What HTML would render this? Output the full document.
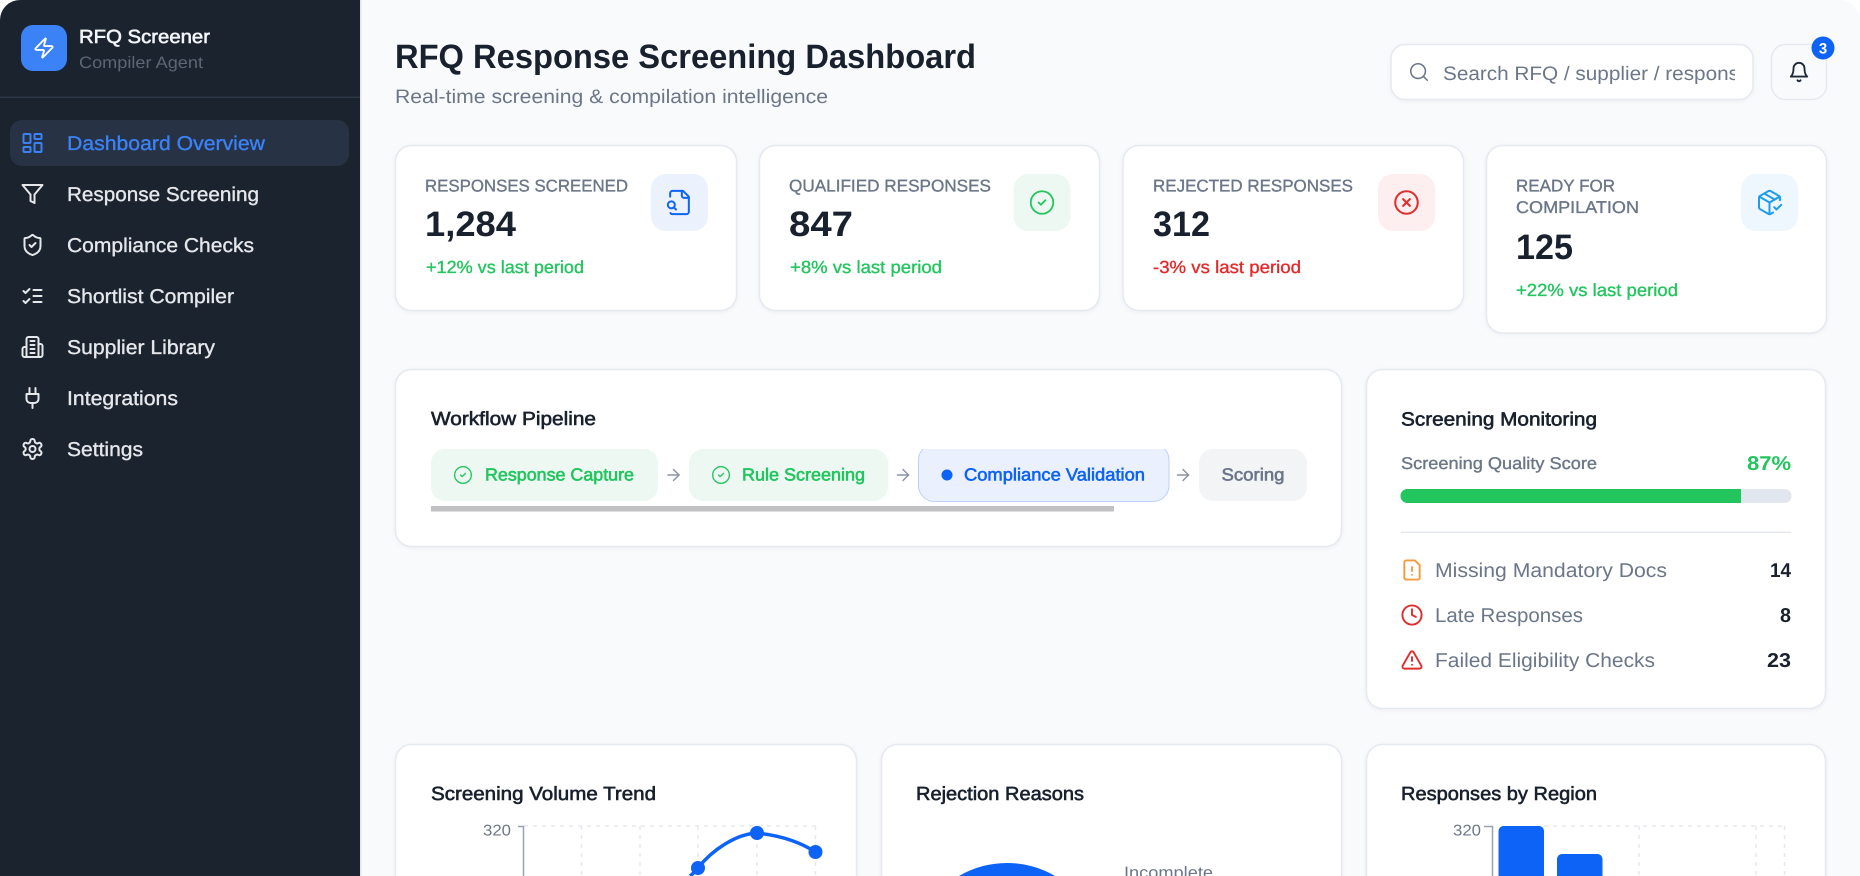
<!DOCTYPE html>
<html lang="en">
<head>
<meta charset="utf-8">
<title>RFQ Response Screening Dashboard</title>
<style>
html,body{margin:0;padding:0;background:#fff;width:1860px;height:876px;overflow:hidden}
svg.root{display:block;font-family:"Liberation Sans",sans-serif;text-rendering:geometricPrecision}
text{fill:currentColor;stroke:currentColor;stroke-width:0}
.m{stroke-width:.35px}
.s{stroke-width:.6px}
.b{font-weight:700}
.card{fill:#fff;stroke:#e6e9ef;stroke-width:1.5;filter:drop-shadow(0 1px 2px rgba(15,23,42,.05))}
.i{fill:none;stroke:currentColor;stroke-linecap:round;stroke-linejoin:round;overflow:visible}
.grid{fill:none;stroke:#e5e8ed;stroke-width:1.5;stroke-dasharray:4 5}
.axis{fill:none;stroke:#98a2b3;stroke-width:1.5}
</style>
</head>
<body>
<svg class="root" xmlns="http://www.w3.org/2000/svg" width="1860" height="876" viewBox="0 0 1860 876">
<defs>
<clipPath id="win"><path d="M0 876V20A20 20 0 0 1 20 0H1840A20 20 0 0 1 1860 20V876Z"/></clipPath>
<clipPath id="sclip"><rect x="1400" y="44" width="335" height="56"/></clipPath>
<clipPath id="pclip"><rect x="420" y="449" width="900" height="60"/></clipPath>
</defs>
<g clip-path="url(#win)">
<rect x="0" y="0" width="1860" height="876" fill="#f9fafc"/>

<!-- Sidebar -->
<rect x="0" y="0" width="360" height="876" fill="#1b232e"/>
<rect x="360" y="0" width="1.5" height="876" fill="#e4e7ec"/>
<rect x="21" y="25" width="46" height="46" rx="12" fill="#3b82f6"/>
<svg class="i" x="32.500" y="36.500" width="23" height="23" viewBox="0 0 24 24" stroke-width="1.9" color="#fff"><path d="M4 14a1 1 0 0 1-.78-1.63l9.9-10.2a.5.5 0 0 1 .86.46l-1.92 6.02A1 1 0 0 0 13 10h7a1 1 0 0 1 .78 1.63l-9.9 10.2a.5.5 0 0 1-.86-.46l1.92-6.02A1 1 0 0 0 11 14z"/></svg>
<text x="79" y="43" font-size="19" class="s" color="#f3f5f8" textLength="131" lengthAdjust="spacingAndGlyphs">RFQ Screener</text>
<text x="79" y="68" font-size="16.500" color="#5d6673" textLength="124" lengthAdjust="spacingAndGlyphs">Compiler Agent</text>
<rect x="0" y="96.500" width="360" height="1.500" fill="#2c3745"/>

<rect x="10" y="120" width="339" height="46" rx="12" fill="#273244"/>
<svg class="i" x="20.500" y="131" width="24" height="24" viewBox="0 0 24 24" stroke-width="2" color="#3b82f6"><rect x="3" y="3" width="7" height="9" rx="1"/><rect x="14" y="3" width="7" height="5" rx="1"/><rect x="14" y="12" width="7" height="9" rx="1"/><rect x="3" y="16" width="7" height="5" rx="1"/></svg>
<text x="67" y="150" font-size="20" class="m" color="#3b82f6" textLength="198" lengthAdjust="spacingAndGlyphs">Dashboard Overview</text>

<svg class="i" x="20.500" y="182" width="24" height="24" viewBox="0 0 24 24" stroke-width="2" color="#e5e7eb"><polygon points="22 3 2 3 10 12.46 10 19 14 21 14 12.46 22 3"/></svg>
<text x="67" y="201" font-size="20" class="m" color="#e5e7eb" textLength="192" lengthAdjust="spacingAndGlyphs">Response Screening</text>

<svg class="i" x="20.500" y="233" width="24" height="24" viewBox="0 0 24 24" stroke-width="2" color="#e5e7eb"><path d="M20 13c0 5-3.500 7.500-7.660 8.950a1 1 0 0 1-.67-.01C7.500 20.500 4 18 4 13V6a1 1 0 0 1 1-1c2 0 4.500-1.200 6.240-2.720a1.170 1.170 0 0 1 1.520 0C14.510 3.810 17 5 19 5a1 1 0 0 1 1 1z"/><path d="m9 12 2 2 4-4"/></svg>
<text x="67" y="252" font-size="20" class="m" color="#e5e7eb" textLength="187" lengthAdjust="spacingAndGlyphs">Compliance Checks</text>

<svg class="i" x="20.500" y="284" width="24" height="24" viewBox="0 0 24 24" stroke-width="2" color="#e5e7eb"><path d="m3 17 2 2 4-4"/><path d="m3 7 2 2 4-4"/><path d="M13 6h8"/><path d="M13 12h8"/><path d="M13 18h8"/></svg>
<text x="67" y="303" font-size="20" class="m" color="#e5e7eb" textLength="167" lengthAdjust="spacingAndGlyphs">Shortlist Compiler</text>

<svg class="i" x="20.500" y="335" width="24" height="24" viewBox="0 0 24 24" stroke-width="2" color="#e5e7eb"><path d="M6 22V4a2 2 0 0 1 2-2h8a2 2 0 0 1 2 2v18Z"/><path d="M6 12H4a2 2 0 0 0-2 2v6a2 2 0 0 0 2 2h2"/><path d="M18 9h2a2 2 0 0 1 2 2v9a2 2 0 0 1-2 2h-2"/><path d="M10 6h4"/><path d="M10 10h4"/><path d="M10 14h4"/><path d="M10 18h4"/></svg>
<text x="67" y="354" font-size="20" class="m" color="#e5e7eb" textLength="148" lengthAdjust="spacingAndGlyphs">Supplier Library</text>

<svg class="i" x="20.500" y="386" width="24" height="24" viewBox="0 0 24 24" stroke-width="2" color="#e5e7eb"><path d="M12 22v-5"/><path d="M9 8V2"/><path d="M15 8V2"/><path d="M18 8v5a4 4 0 0 1-4 4h-4a4 4 0 0 1-4-4V8Z"/></svg>
<text x="67" y="405" font-size="20" class="m" color="#e5e7eb" textLength="111" lengthAdjust="spacingAndGlyphs">Integrations</text>

<svg class="i" x="20.500" y="437" width="24" height="24" viewBox="0 0 24 24" stroke-width="2" color="#e5e7eb"><path d="M12.220 2h-.44a2 2 0 0 0-2 2v.18a2 2 0 0 1-1 1.730l-.43.25a2 2 0 0 1-2 0l-.15-.08a2 2 0 0 0-2.730.73l-.22.38a2 2 0 0 0 .73 2.730l.15.1a2 2 0 0 1 1 1.720v.51a2 2 0 0 1-1 1.740l-.15.09a2 2 0 0 0-.73 2.730l.22.38a2 2 0 0 0 2.730.73l.15-.08a2 2 0 0 1 2 0l.43.25a2 2 0 0 1 1 1.730V20a2 2 0 0 0 2 2h.44a2 2 0 0 0 2-2v-.18a2 2 0 0 1 1-1.730l.43-.25a2 2 0 0 1 2 0l.15.08a2 2 0 0 0 2.730-.73l.22-.39a2 2 0 0 0-.73-2.730l-.15-.08a2 2 0 0 1-1-1.740v-.5a2 2 0 0 1 1-1.740l.15-.09a2 2 0 0 0 .73-2.730l-.22-.38a2 2 0 0 0-2.730-.73l-.15.08a2 2 0 0 1-2 0l-.43-.25a2 2 0 0 1-1-1.730V4a2 2 0 0 0-2-2z"/><circle cx="12" cy="12" r="3"/></svg>
<text x="67" y="456" font-size="20" class="m" color="#e5e7eb" textLength="76" lengthAdjust="spacingAndGlyphs">Settings</text>

<!-- Header -->
<text x="395" y="68" font-size="33.800" class="b" color="#18212d" textLength="581" lengthAdjust="spacingAndGlyphs">RFQ Response Screening Dashboard</text>
<text x="395" y="103" font-size="19.500" color="#6b7688" textLength="433" lengthAdjust="spacingAndGlyphs">Real-time screening &amp; compilation intelligence</text>

<rect class="card" x="1391" y="44.500" width="362" height="55" rx="14"/>
<svg class="i" x="1408" y="61" width="22" height="22" viewBox="0 0 24 24" stroke-width="1.700" color="#6b7688"><circle cx="11" cy="11" r="8"/><path d="m21 21-4.300-4.300"/></svg>
<g clip-path="url(#sclip)"><text x="1443" y="80" font-size="19.500" color="#6b7688" textLength="296" lengthAdjust="spacingAndGlyphs">Search RFQ / supplier / respons</text></g>

<rect x="1771.500" y="44.500" width="55" height="55" rx="14" fill="#f9fafc" stroke="#e6e9ef" stroke-width="1.500"/>
<svg class="i" x="1788" y="61" width="22" height="22" viewBox="0 0 24 24" stroke-width="2" color="#1f2937"><path d="M6 8a6 6 0 0 1 12 0c0 7 3 9 3 9H3s3-2 3-9"/><path d="M10.300 21a1.940 1.940 0 0 0 3.400 0"/></svg>
<circle cx="1823" cy="48" r="11.500" fill="#0d63f5"/>
<text x="1823" y="53.500" font-size="15" class="b" color="#fff" text-anchor="middle">3</text>

<!-- Stat cards -->
<rect class="card" x="395.500" y="145.500" width="341" height="165" rx="16"/>
<text x="425" y="191.500" font-size="17" class="m" color="#6b7688" textLength="203" lengthAdjust="spacingAndGlyphs">RESPONSES SCREENED</text>
<text x="425" y="236" font-size="35.500" class="b" color="#18212d" textLength="91" lengthAdjust="spacingAndGlyphs">1,284</text>
<text x="426" y="273" font-size="17.500" class="m" color="#22c55e" textLength="158" lengthAdjust="spacingAndGlyphs">+12% vs last period</text>
<rect x="651" y="174" width="57" height="57" rx="15" fill="#ecf1fe"/>
<svg class="i" x="665.500" y="188.500" width="28" height="28" viewBox="0 0 24 24" stroke-width="1.700" color="#0d63f5"><path d="M14 2v4a2 2 0 0 0 2 2h4"/><path d="M4.268 21a2 2 0 0 0 1.727 1H18a2 2 0 0 0 2-2V7l-5-5H6a2 2 0 0 0-2 2v3"/><path d="m9 18-1.500-1.500"/><circle cx="5" cy="14" r="3"/></svg>

<rect class="card" x="759.500" y="145.500" width="340" height="165" rx="16"/>
<text x="789" y="191.500" font-size="17" class="m" color="#6b7688" textLength="202" lengthAdjust="spacingAndGlyphs">QUALIFIED RESPONSES</text>
<text x="789" y="236" font-size="35.500" class="b" color="#18212d" textLength="64" lengthAdjust="spacingAndGlyphs">847</text>
<text x="790" y="273" font-size="17.500" class="m" color="#22c55e" textLength="152" lengthAdjust="spacingAndGlyphs">+8% vs last period</text>
<rect x="1013.500" y="174" width="57" height="57" rx="15" fill="#ecf8f1"/>
<svg class="i" x="1028.500" y="189" width="27" height="27" viewBox="0 0 24 24" stroke-width="1.600" color="#22c55e"><circle cx="12" cy="12" r="10"/><path d="m9 12 2 2 4-4"/></svg>

<rect class="card" x="1123" y="145.500" width="340.500" height="165" rx="16"/>
<text x="1153" y="191.500" font-size="17" class="m" color="#6b7688" textLength="200" lengthAdjust="spacingAndGlyphs">REJECTED RESPONSES</text>
<text x="1153" y="236" font-size="35.500" class="b" color="#18212d" textLength="57" lengthAdjust="spacingAndGlyphs">312</text>
<text x="1153" y="273" font-size="17.500" class="m" color="#e5292b" textLength="148" lengthAdjust="spacingAndGlyphs">-3% vs last period</text>
<rect x="1378" y="174" width="57" height="57" rx="15" fill="#fdeeef"/>
<svg class="i" x="1393" y="189" width="27" height="27" viewBox="0 0 24 24" stroke-width="1.800" color="#e02d2d"><circle cx="12" cy="12" r="10"/><path d="m15 9-6 6"/><path d="m9 9 6 6"/></svg>

<rect class="card" x="1486.500" y="145.500" width="340" height="187.500" rx="16"/>
<text x="1516" y="191.500" font-size="17" class="m" color="#6b7688" textLength="99" lengthAdjust="spacingAndGlyphs">READY FOR</text>
<text x="1516" y="213" font-size="17" class="m" color="#6b7688" textLength="123" lengthAdjust="spacingAndGlyphs">COMPILATION</text>
<text x="1516" y="259" font-size="35.500" class="b" color="#18212d" textLength="57" lengthAdjust="spacingAndGlyphs">125</text>
<text x="1516" y="296" font-size="17.500" class="m" color="#22c55e" textLength="162" lengthAdjust="spacingAndGlyphs">+22% vs last period</text>
<rect x="1741" y="174" width="57" height="57" rx="15" fill="#eef6fe"/>
<svg class="i" x="1755.500" y="188.500" width="28" height="28" viewBox="0 0 24 24" stroke-width="1.700" color="#1d9bf0"><path d="m16 16 2 2 4-4"/><path d="M21 10V8a2 2 0 0 0-1-1.730l-7-4a2 2 0 0 0-2 0l-7 4A2 2 0 0 0 3 8v8a2 2 0 0 0 1 1.730l7 4a2 2 0 0 0 2 0l2-1.140"/><path d="m7.500 4.270 9 5.150"/><polyline points="3.290 7 12 12 20.710 7"/><line x1="12" y1="22" x2="12" y2="12"/></svg>

<!-- Workflow -->
<rect class="card" x="395.500" y="369.500" width="946" height="177" rx="16"/>
<text x="431" y="425" font-size="19" class="s" color="#18212d" textLength="165" lengthAdjust="spacingAndGlyphs">Workflow Pipeline</text>
<g clip-path="url(#pclip)">
<rect x="431" y="449" width="227" height="52" rx="14" fill="#ecf8f1"/>
<rect x="689" y="449" width="199" height="52" rx="14" fill="#ecf8f1"/>
<rect x="918.500" y="444" width="250.500" height="57.500" rx="16" fill="#ebf0fe" stroke="#bcd0fb" stroke-width="1"/>
<rect x="1199" y="449" width="108" height="52" rx="14" fill="#f3f4f6"/>
</g>
<svg class="i" x="453" y="465" width="20" height="20" viewBox="0 0 24 24" stroke-width="1.600" color="#22c55e"><circle cx="12" cy="12" r="10"/><path d="m9 12 2 2 4-4"/></svg>
<text x="485" y="480.500" font-size="17.500" class="s" color="#22c55e" textLength="149" lengthAdjust="spacingAndGlyphs">Response Capture</text>
<svg class="i" x="711" y="465" width="20" height="20" viewBox="0 0 24 24" stroke-width="1.600" color="#22c55e"><circle cx="12" cy="12" r="10"/><path d="m9 12 2 2 4-4"/></svg>
<text x="742" y="480.500" font-size="17.500" class="s" color="#22c55e" textLength="123" lengthAdjust="spacingAndGlyphs">Rule Screening</text>
<circle cx="947" cy="475" r="5.500" fill="#0d63f5"/>
<text x="964" y="480.500" font-size="17.500" class="s" color="#0d63f5" textLength="181" lengthAdjust="spacingAndGlyphs">Compliance Validation</text>
<text x="1221.500" y="480.500" font-size="17.500" class="s" color="#6b7688" textLength="63" lengthAdjust="spacingAndGlyphs">Scoring</text>
<svg class="i" x="664" y="465.500" width="19" height="19" viewBox="0 0 24 24" stroke-width="1.800" color="#8a93a3"><path d="M5 12h14"/><path d="m12 5 7 7-7 7"/></svg>
<svg class="i" x="893.500" y="465.500" width="19" height="19" viewBox="0 0 24 24" stroke-width="1.800" color="#8a93a3"><path d="M5 12h14"/><path d="m12 5 7 7-7 7"/></svg>
<svg class="i" x="1173.500" y="465.500" width="19" height="19" viewBox="0 0 24 24" stroke-width="1.800" color="#8a93a3"><path d="M5 12h14"/><path d="m12 5 7 7-7 7"/></svg>
<rect x="431" y="506" width="683" height="5.500" fill="#c1c1c3"/>

<!-- Monitoring -->
<rect class="card" x="1366.500" y="369.500" width="459" height="339" rx="16"/>
<text x="1401" y="425.500" font-size="19" class="s" color="#18212d" textLength="196" lengthAdjust="spacingAndGlyphs">Screening Monitoring</text>
<text x="1401" y="469" font-size="17" class="m" color="#6b7688" textLength="196" lengthAdjust="spacingAndGlyphs">Screening Quality Score</text>
<text x="1747" y="470" font-size="20" class="b" color="#22c55e" textLength="44" lengthAdjust="spacingAndGlyphs">87%</text>
<rect x="1400.500" y="489" width="391" height="14" rx="7" fill="#e2e6ee"/>
<path d="M1741 489H1407.500a7 7 0 0 0 0 14H1741Z" fill="#22c55e"/>
<rect x="1401" y="531.500" width="390" height="1.500" fill="#e5e8ee"/>

<svg class="i" x="1400.500" y="558.500" width="23" height="23" viewBox="0 0 24 24" stroke-width="2" color="#f59a3e"><path d="M15 2H6a2 2 0 0 0-2 2v16a2 2 0 0 0 2 2h12a2 2 0 0 0 2-2V7Z"/><path d="M12 9v4"/><path d="M12 17h.01"/></svg>
<text x="1435" y="577" font-size="20" color="#6b7688" stroke-width="0" textLength="232" lengthAdjust="spacingAndGlyphs">Missing Mandatory Docs</text>
<text x="1770" y="577" font-size="20" class="b" color="#18212d" textLength="21" lengthAdjust="spacingAndGlyphs">14</text>

<svg class="i" x="1400.500" y="603.500" width="23" height="23" viewBox="0 0 24 24" stroke-width="2" color="#e02d2d"><circle cx="12" cy="12" r="10"/><polyline points="12 6 12 12 16 14"/></svg>
<text x="1435" y="622" font-size="20" color="#6b7688" textLength="148" lengthAdjust="spacingAndGlyphs">Late Responses</text>
<text x="1780" y="622" font-size="20" class="b" color="#18212d" textLength="11" lengthAdjust="spacingAndGlyphs">8</text>

<svg class="i" x="1400.500" y="648.500" width="23" height="23" viewBox="0 0 24 24" stroke-width="2" color="#e02d2d"><path d="m21.730 18-8-14a2 2 0 0 0-3.480 0l-8 14A2 2 0 0 0 4 21h16a2 2 0 0 0 1.730-3"/><path d="M12 9v4"/><path d="M12 17h.01"/></svg>
<text x="1435" y="667" font-size="20" color="#6b7688" textLength="220" lengthAdjust="spacingAndGlyphs">Failed Eligibility Checks</text>
<text x="1767" y="667" font-size="20" class="b" color="#18212d" textLength="24" lengthAdjust="spacingAndGlyphs">23</text>

<!-- Chart cards -->
<path class="card" d="M395.500 877V760.500a16 16 0 0 1 16-16H840.500a16 16 0 0 1 16 16V877Z"/>
<path class="card" d="M881.500 877V760.500a16 16 0 0 1 16-16H1325.500a16 16 0 0 1 16 16V877Z"/>
<path class="card" d="M1366.500 877V760.500a16 16 0 0 1 16-16H1809.500a16 16 0 0 1 16 16V877Z"/>
<text x="431" y="800" font-size="19" class="s" color="#18212d" textLength="225" lengthAdjust="spacingAndGlyphs">Screening Volume Trend</text>
<text x="916" y="800" font-size="19" class="s" color="#18212d" textLength="168" lengthAdjust="spacingAndGlyphs">Rejection Reasons</text>
<text x="1401" y="800" font-size="19" class="s" color="#18212d" textLength="196" lengthAdjust="spacingAndGlyphs">Responses by Region</text>

<!-- Line chart -->
<path class="grid" d="M524 826H815.500M581.500 826V876M640 826V876M698 826V876M757 826V876M815.500 826V876"/>
<path class="axis" d="M518 826.500H523.500V876"/>
<text x="483" y="835.500" font-size="15.500" color="#6b7688" textLength="28" lengthAdjust="spacingAndGlyphs">320</text>
<path d="M690 876Q694 873 698 868C712 850 736 834 757 833C776 835 797 840 815.500 852" fill="none" stroke="#0d63f5" stroke-width="3.500"/>
<circle cx="698" cy="868" r="7" fill="#0d63f5"/>
<circle cx="757" cy="833" r="7" fill="#0d63f5"/>
<circle cx="815.500" cy="852" r="7" fill="#0d63f5"/>

<!-- Pie -->
<path d="M959 876A95 95 0 0 1 1055 876Z" fill="#0d63f5"/>
<text x="1124" y="878" font-size="16.500" color="#6b7688" textLength="89" lengthAdjust="spacingAndGlyphs">Incomplete</text>

<!-- Bars -->
<path class="grid" d="M1544 826H1785M1639 826V876M1756 826V876M1784.500 826V876"/>
<path class="axis" d="M1484 826.500H1492.500V876"/>
<text x="1453" y="835.500" font-size="15.500" color="#6b7688" textLength="28" lengthAdjust="spacingAndGlyphs">320</text>
<path d="M1498.500 876V831a5 5 0 0 1 5-5H1539a5 5 0 0 1 5 5V876Z" fill="#0d63f5"/>
<path d="M1557 876V859a5 5 0 0 1 5-5H1597.500a5 5 0 0 1 5 5V876Z" fill="#0d63f5"/>
</g>
</svg>
</body>
</html>
